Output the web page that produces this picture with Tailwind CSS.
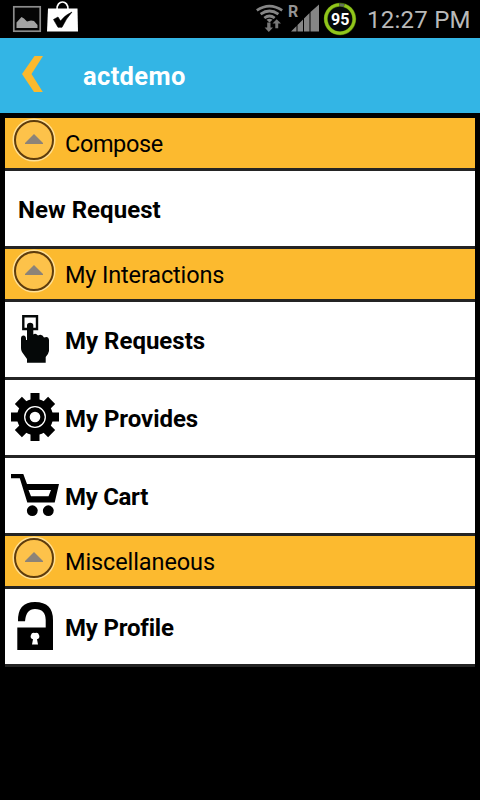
<!DOCTYPE html>
<html lang="en">
<head>
<meta charset="utf-8">
<title>actdemo</title>
<script src="https://cdn.jsdelivr.net/npm/@tailwindcss/browser@4"></script>
</head>
<body class="bg-black w-[480px] h-[800px] overflow-hidden font-[Roboto,sans-serif]">
<svg class="hidden">
  <symbol id="up" viewBox="0 0 44 44">
    <circle cx="22" cy="22" r="20.500" fill="#fdc44e" stroke="#ffe095" stroke-width="2"/>
    <circle cx="22" cy="22" r="19" fill="#fdc24a" stroke="#5e3c0c" stroke-width="2"/>
    <path d="M22 16L31 25V26H13V25Z" fill="#8c8378"/>
  </symbol>
</svg>
<header class="h-[38px] flex items-center">
  <svg class="w-[100px] h-[38px]" viewBox="0 0 100 38">
    <rect x="13.800" y="6.800" width="26.400" height="24.400" fill="#050505" stroke="#8c8c8c" stroke-width="1.700"/>
    <path d="M16.500 28V22.500L21.500 17L24 18.500L27 21.500L31 20.500L34 21L37.500 25V28Z" fill="#a2a2a2"/>
    <path d="M57 9.500C56.500 -.5 68.500 -.5 68 9.500" fill="none" stroke="#fff" stroke-width="1.700"/>
    <path d="M48 8.500H77.500L78 31.500H47Z" fill="#fff"/>
    <path d="M53.500 19.500L58 17L60.500 21Q65 15 72 12Q66 18.500 62 27.300H58Z" fill="#000" stroke="#000" stroke-width=".6"/>
  </svg>
  <svg class="ml-[152px] w-[108px] h-[38px]" viewBox="252 0 108 38">
    <g fill="none" stroke="#858585" stroke-width="2.700">
      <path d="M256.800 10.300Q269.500 1.800 282.200 10.300"/>
      <path d="M260.600 14.200Q269.500 7.800 278.400 14.200"/>
      <path d="M264.300 18Q269.500 14 274.700 18"/>
    </g>
    <path d="M266.500 19.800Q269.500 17.600 272.500 19.800L269.500 22.500Z" fill="#858585"/>
    <path d="M267.200 22.500H270.500V27.500H273L268.800 32L264.600 27.500H267.200ZM275.300 28.200V23.500H272.500L276.700 19.300L281 23.500H278.200V28.200Z" fill="#777"/>
    <text x="288" y="17" font-family="Roboto" font-size="16" font-weight="700" fill="#959595">R</text>
    <path d="M291 31.500L296.500 26V31.500ZM297.500 25L303 19.400V31.500H297.500ZM304 18.400L309.500 13V31.500H304ZM310.500 12L319 4.500V31.500H310.500Z" fill="#858585"/>
    <circle cx="340" cy="19" r="14.200" fill="#05080a" stroke="#456b0b" stroke-width="4"/>
    <path d="M344.400 5.500A14.200 14.200 0 1 1 339 4.800" fill="none" stroke="#91c51b" stroke-width="3"/>
    <path d="M339.500 4.800L344 5.400" stroke="#66735c" stroke-width="2.500"/>
    <text x="340.200" y="24.700" text-anchor="middle" font-family="Roboto" font-size="16" font-weight="700" fill="#fff">95</text>
  </svg>
  <div class="ml-[7px] mt-[2px] text-[24px] leading-[36px] tracking-[0.25px] text-[#b9b9b9] whitespace-nowrap">12:27 PM</div>
</header>
<nav class="h-[75px] bg-[#33b5e5] flex items-center">
  <svg class="ml-[22px] w-[22px] h-[36px] -mt-[3px]" viewBox="0 0 22 36"><path d="M12.500 0H21L9.500 18L20.800 36H12L0 18Z" fill="#fbb92e"/></svg>
  <h1 class="ml-[39px] text-[25.5px] leading-[30px] tracking-[0.35px] font-bold text-white">actdemo</h1>
</nav>
<main class="mx-[5px] mt-[5px] text-black text-[24px] leading-[30px]">
  <div class="h-[53px] border-b-[3px] border-[#242424] bg-[#fcba2f] flex"><svg class="ml-[7px] w-[44px] h-[44px]"><use href="#up"/></svg><span class="ml-[9px] mt-[11px] text-[23.5px] tracking-[-0.4px]">Compose</span></div>
  <div class="h-[78px] border-b-[3px] border-[#242424] bg-white flex items-center"><span class="ml-[13px] mt-[3px] font-bold tracking-[0.05px]">New Request</span></div>
  <div class="h-[53px] border-b-[3px] border-[#242424] bg-[#fcba2f] flex"><svg class="ml-[7px] w-[44px] h-[44px]"><use href="#up"/></svg><span class="ml-[9px] mt-[11px] text-[23.5px] tracking-[-0.15px]">My Interactions</span></div>
  <div class="h-[78px] border-b-[3px] border-[#242424] bg-white flex items-center">
    <svg class="ml-[6px] -mt-[1px] w-[48px] h-[48px]" viewBox="0 0 48 48">
      <path d="M16 14H12.300V1.300H26V14H22" fill="none" stroke="#050808" stroke-width="2.400"/>
      <path d="M16 25V10.500Q16 7.700 19.200 7.700Q22.300 7.700 22.300 10.500V19.500Q24.500 17.500 27 20.500Q31 18.500 33 22.500Q37.500 20.500 38 25V36Q37.500 39 34.700 42V47.700H16V44L11 37Q10 35.500 10 33V23.500Q10 20.500 12.500 20.500Q15 20.500 15 24V25Z" fill="#050808"/>
    </svg>
    <span class="ml-[6px] mt-[3px] font-bold">My Requests</span></div>
  <div class="h-[78px] border-b-[3px] border-[#242424] bg-white flex items-center">
    <svg class="ml-[6px] -mt-[1px] w-[48px] h-[48px]" viewBox="0 0 48 48">
      <circle cx="24" cy="24" r="18" fill="#000"/>
      <path d="M19.500 0H28.500V48H19.500ZM0 19.500H48V28.500H0Z" fill="#000"/>
      <path d="M19 .5H29V47.500H19ZM.5 19H47.500V29H.5Z" fill="#000" transform="rotate(45 24 24)"/>
      <circle cx="24" cy="24" r="10.300" fill="none" stroke="#fff" stroke-width="1.300"/>
      <circle cx="24" cy="24" r="5.300" fill="#fff"/>
    </svg>
    <span class="ml-[6px] mt-[3px] font-bold tracking-[-0.05px]">My Provides</span></div>
  <div class="h-[78px] border-b-[3px] border-[#242424] bg-white flex items-center">
    <svg class="ml-[6px] -mt-[1px] w-[48px] h-[48px]" viewBox="0 0 48 48">
      <path fill-rule="evenodd" d="M0 3H12.300L16 13H48L43.700 31.500H16.300L8.800 7.200H0ZM17.500 19L20 25.200H37.500L40 19Z" fill="#000"/>
      <circle cx="21.300" cy="39.700" r="5.400"/><circle cx="37.300" cy="39.700" r="5.400"/>
    </svg>
    <span class="ml-[6px] mt-[3px] font-bold tracking-[-0.3px]">My Cart</span></div>
  <div class="h-[53px] border-b-[3px] border-[#242424] bg-[#fcba2f] flex"><svg class="ml-[7px] w-[44px] h-[44px]"><use href="#up"/></svg><span class="ml-[9px] mt-[11px] text-[23.5px] tracking-[-0.1px]">Miscellaneous</span></div>
  <div class="h-[78px] border-b-[3px] border-[#242424] bg-white flex items-center">
    <svg class="ml-[6px] -mt-[1px] w-[48px] h-[48px]" viewBox="0 0 48 48">
      <path d="M6.300 48V25.400H34.700V18Q34.500 7 24 7Q15 7 14 19.300H7Q6.500 0 24 0Q42 0 42 18V48Z"/>
      <path d="M24 31A3.300 3.300 0 0 1 26 37.300L27 42.500H21L22 37.300A3.300 3.300 0 0 1 24 31Z" fill="#fff"/>
    </svg>
    <span class="ml-[6px] mt-[3px] font-bold tracking-[-0.2px]">My Profile</span></div>
</main>
</body>
</html>
